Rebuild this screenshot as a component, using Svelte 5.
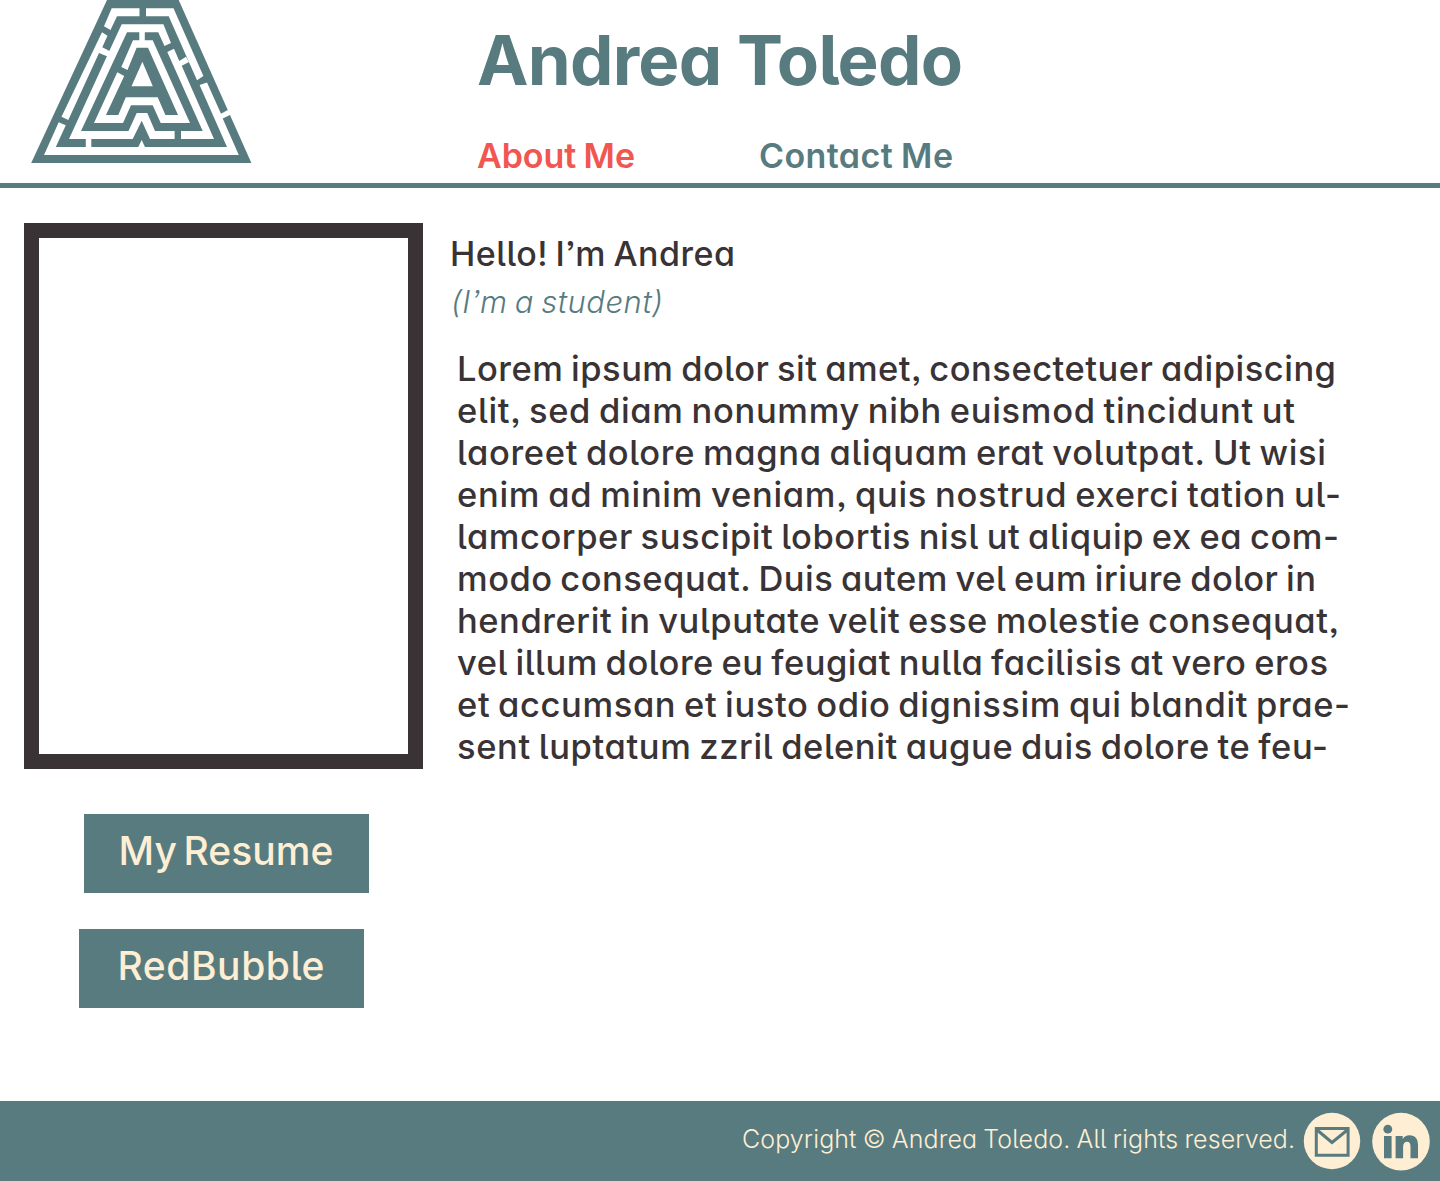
<script>
  const lines = [
    ['Lorem ipsum dolor sit amet, consectetuer adipiscing', 879],
    ['elit, sed diam nonummy nibh euismod tincidunt ut', 838],
    ['laoreet dolore magna aliquam erat volutpat. Ut wisi', 869],
    ['enim ad minim veniam, quis nostrud exerci tation ul-', 884],
    ['lamcorper suscipit lobortis nisl ut aliquip ex ea com-', 882],
    ['modo consequat. Duis autem vel eum iriure dolor in', 859],
    ['hendrerit in vulputate velit esse molestie consequat,', 882],
    ['vel illum dolore eu feugiat nulla facilisis at vero eros', 871],
    ['et accumsan et iusto odio dignissim qui blandit prae-', 893],
    ['sent luptatum zzril delenit augue duis dolore te feu-', 871],
  ];

  // Tracks a single line of text so that it spans the given width.
  function fit(node, width) {
    const natural = node.getBoundingClientRect().width;
    const gaps = node.textContent.length - 1;
    node.style.letterSpacing = `${(width - natural) / gaps}px`;
  }
</script>

<div class="page">
  <header>
    <svg class="logo" viewBox="31 0 221 164" width="221" height="164" role="img" aria-label="Maze logo">
      <path class="teal" d="M107 0H178.7L251.4 163H31.2Z" />
      <g class="white">
        <path d="M111.7 8.3H139.5V16.2H117L110.5 30L104 26.3Z" />
        <path d="M146 8.3H173.5L203.4 76L197 80.3L168.7 16.2H146Z" />
        <path d="M102 32.3L107.5 35.7L102.3 47.3L111 51.7L107.5 56.5L99 53L68.3 120L61.5 116.7Z" />
        <path d="M58.7 122.3L65.8 125.3L55.8 147H138.3L141.7 140L145 147H227L199.6 85L207 82.4L221 113.7L228.2 109.8L231 114.4L222.7 118.4L238.8 155H44Z" />
        <path d="M121.7 24.2H163.4L171 43L164.5 46L158.2 32.2H144.8V40.2H152.7L190 123H160.7L152.7 105.2H131L123 123H94L117.3 72.3L124.2 76L106 115H118.3L125.8 97.3H157.7L165.4 115H178L148 47.7H136.6L127.5 70L121.3 67L133 40.2H139.3V32.2H127L81 131H128.5L136.7 113H147.3L155 131H174.6V139H150L141.7 120.7L132.7 139H91.3V147.5H85.8V139H69L109.3 51Z" />
        <path d="M167.3 52L174 48.7L179.3 61L186 56.7L189 62L181.7 65.7L214 139H181V131H202.7Z" />
        <path d="M142.4 61.8L152.8 86.2H131.5Z" />
      </g>
    </svg>
    <div class="heading">
      <h1><span use:fit={486}>Andrea Toledo</span></h1>
      <nav>
        <a class="active" href="#about"><span use:fit={158}>About Me</span></a>
        <a href="#contact"><span use:fit={194}>Contact Me</span></a>
      </nav>
    </div>
  </header>

  <main>
    <aside>
      <div class="photo"></div>
      <a class="button resume" href="#resume"><span use:fit={215}>My Resume</span></a>
      <a class="button shop" href="#redbubble"><span use:fit={207}>RedBubble</span></a>
    </aside>
    <section>
      <h2><span use:fit={285}>Hello! I’m Andrea</span></h2>
      <p class="role"><span use:fit={212}>(I’m a student)</span></p>
      <div class="bio">
        {#each lines as [text, width]}
          <p><span use:fit={width}>{text}</span></p>
        {/each}
      </div>
    </section>
  </main>

  <footer>
    <p><span use:fit={553}>Copyright © Andrea Toledo. All rights reserved.</span></p>
    <svg class="mail" viewBox="0 0 58 58" width="58" height="58" role="img" aria-label="Email">
      <circle cx="29" cy="29" r="28.2" />
      <path class="line" d="M13.3 16.6H45.1V43.3H13.3Z" />
      <path class="line" d="M13.5 17.5L29 30.5L45 17.5" />
    </svg>
    <svg class="linkedin" viewBox="0 0 58 59" width="58" height="59" role="img" aria-label="LinkedIn">
      <circle cx="29" cy="29.6" r="28.8" />
      <circle class="mark" cx="15.8" cy="17.2" r="4.4" />
      <path class="mark" d="M12 24H19.6V46.2H12ZM23.6 24H30.7V27C32.2 24.5 34.6 23.3 37.4 23.3C43.5 23.3 46 27 46 33.5V46.2H38.5V34.7C38.5 31.5 37.6 29.7 35.1 29.7C32.4 29.7 31.1 31.7 31.1 34.7V46.2H23.6Z" />
    </svg>
  </footer>
</div>

<style>
  :global(body) {
    margin: 0;
    background: #fff;
  }
  .page {
    width: 1440px;
    height: 1181px;
    display: flex;
    flex-direction: column;
    overflow: hidden;
    font-family: Inter, 'Open Sans', sans-serif;
    font-feature-settings: 'cv11', 'cv05', 'ss03';
    font-optical-sizing: none;
    color: #393335;
  }
  h1, h2, p {
    margin: 0;
  }
  a {
    text-decoration: none;
  }
  span {
    display: inline-block;
    white-space: nowrap;
  }
  header {
    box-sizing: border-box;
    flex: none;
    height: 188px;
    display: flex;
    border-bottom: 5px solid #587b7f;
    padding-left: 31px;
    color: #587b7f;
  }
  .logo {
    flex: none;
    display: block;
  }
  .teal {
    fill: #587b7f;
  }
  .white {
    fill: #fff;
  }
  .heading {
    padding: 20px 0 0 225px;
  }
  h1 {
    font-size: 69px;
    line-height: 80px;
    font-weight: 700;
  }
  nav {
    display: flex;
    margin-top: 35px;
    gap: 124px;
    font-size: 34px;
    line-height: 42px;
    font-weight: 600;
    word-spacing: -1px;
  }
  nav a {
    color: #587b7f;
  }
  nav .active {
    width: 158px;
    color: #f15650;
  }
  main {
    flex: 1;
    display: flex;
  }
  aside {
    width: 399px;
    padding: 35px 0 0 24px;
  }
  .photo {
    box-sizing: border-box;
    height: 546px;
    border: 15px solid #393335;
  }
  .button {
    display: block;
    box-sizing: border-box;
    width: 285px;
    height: 79px;
    background: #587b7f;
    color: #fdeed4;
    font-size: 39px;
    line-height: 74px;
    font-weight: 500;
    word-spacing: -4px;
  }
  .resume {
    margin: 45px 0 0 60px;
    padding-left: 34.5px;
  }
  .shop {
    margin: 36px 0 0 55px;
    padding-left: 38.5px;
  }
  section {
    padding: 45px 0 0 27px;
  }
  h2 {
    font-size: 34px;
    line-height: 42px;
    font-weight: 500;
    word-spacing: -2px;
  }
  .role {
    margin: 6px 0 0 1px;
    font-size: 31px;
    line-height: 42px;
    font-weight: 300;
    font-style: italic;
    word-spacing: -2px;
    color: #587b7f;
  }
  .bio {
    margin: 25px 0 0 7px;
    font-size: 34.5px;
    line-height: 42px;
    font-weight: 500;
    word-spacing: -2px;
  }
  .bio p {
    height: 42px;
  }
  footer {
    flex: none;
    box-sizing: border-box;
    height: 80px;
    display: flex;
    align-items: flex-start;
    justify-content: flex-end;
    background: #587b7f;
    color: #fdeed4;
    padding: 11px 10px 0 0;
  }
  footer p {
    width: 553px;
    margin: 7px 8px 0 0;
    font-size: 25px;
    line-height: 40px;
    font-weight: 300;
    word-spacing: -1px;
  }
  footer svg {
    display: block;
    fill: #fdeed4;
  }
  .linkedin {
    margin-left: 11px;
  }
  .line {
    fill: none;
    stroke: #587b7f;
    stroke-width: 3;
  }
  .mark {
    fill: #587b7f;
  }
</style>
